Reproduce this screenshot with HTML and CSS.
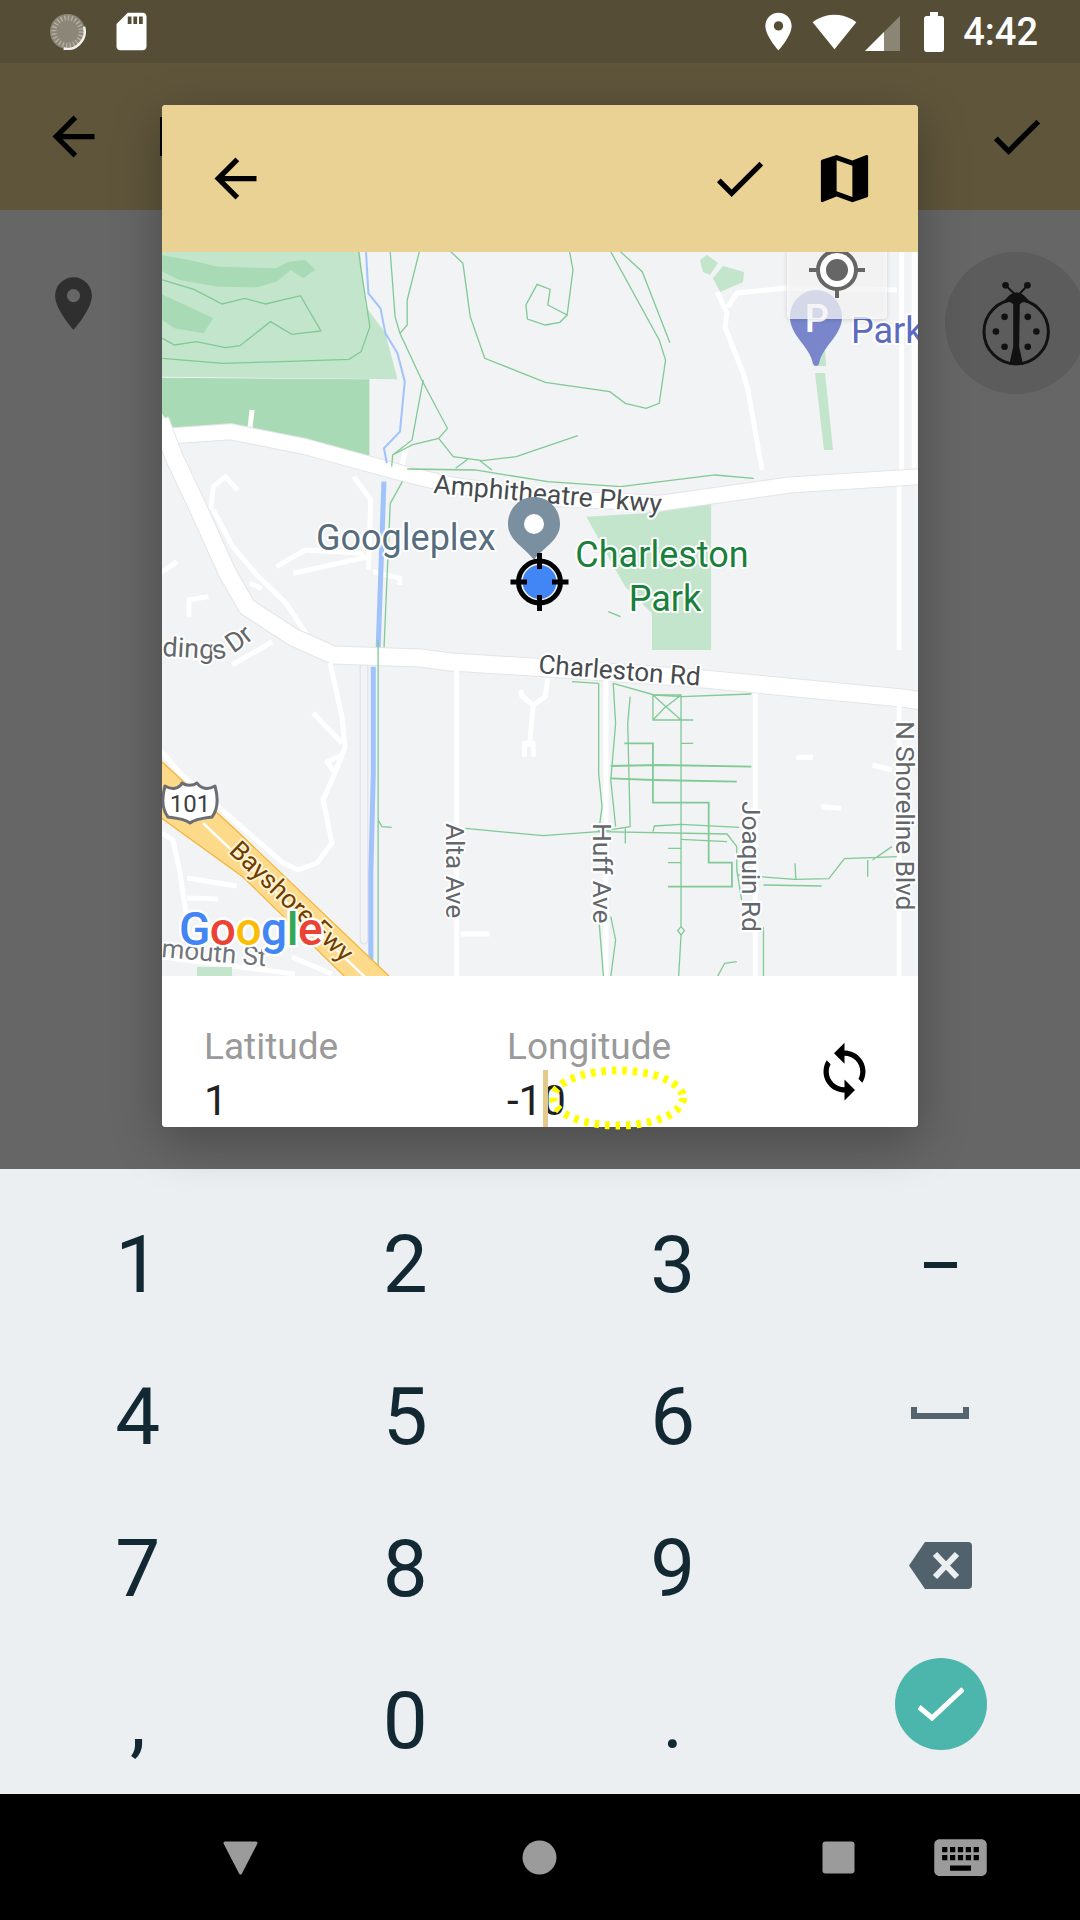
FILE: index.html
```html
<!DOCTYPE html>
<html lang="en">
<head>
<meta charset="utf-8">
<title>Location picker</title>
<link rel="stylesheet" href="styles.css">
</head>
<body>
<div class="screen">
  <div class="status">
    <svg class="st-spin" viewBox="0 0 38 38"><circle cx="19" cy="19" r="18" class="spin-bg"/><circle cx="19" cy="19" r="14" class="spin-ticks"/><path d="M36 14A18 18 0 0 1 15 36.500" class="spin-arc"/></svg>
    <svg class="ico45 st-sd" viewBox="0 0 24 24"><path class="white" d="M18 2h-8L4.020 8 4 20c0 1.100.9 2 2 2h12c1.100 0 2-.9 2-2V4c0-1.100-.9-2-2-2zm-6 6h-2V4h2v4zm3 0h-2V4h2v4zm3 0h-2V4h2v4z"/></svg>
    <div class="status-right">
      <svg class="ico45 st-pin" viewBox="0 0 24 24"><path class="white" d="M12 2C8.130 2 5 5.130 5 9c0 5.250 7 13 7 13s7-7.750 7-13c0-3.870-3.130-7-7-7zm0 9.500a2.500 2.500 0 010-5 2.500 2.500 0 010 5z"/></svg>
      <svg class="ico45" viewBox="0 0 24 24"><path class="white" d="M12.010 21.490L23.640 7c-.45-.34-4.930-4-11.640-4C5.280 3 .81 6.660.36 7l11.630 14.490.01.01.01-.01z"/></svg>
      <svg class="st-signal" viewBox="0 0 35 35"><path class="signal-dim" d="M0 35H35V0z"/><path class="white" d="M0 35H19V16z"/></svg>
      <svg class="ico48 st-batt" viewBox="0 0 24 24"><path class="white" d="M15.670 4H14V2h-4v2H8.330C7.600 4 7 4.600 7 5.330v15.330C7 21.400 7.600 22 8.330 22h7.330c.74 0 1.340-.6 1.340-1.330V5.330C17 4.600 16.400 4 15.670 4z"/></svg>
      <span class="time">4:42</span>
    </div>
  </div>

  <div class="toolbar">
    <svg class="ico63" viewBox="0 0 24 24"><path d="M20 11H7.830l5.590-5.590L12 4l-8 8 8 8 1.410-1.410L7.830 13H20v-2z"/></svg>
    <span class="tb-title"></span>
    <svg class="ico63 tb-check" viewBox="0 0 24 24"><path d="M9 16.170L4.830 12l-1.420 1.410L9 19 21 7l-1.410-1.410z"/></svg>
  </div>

  <div class="content">
    <svg class="ico63 content-pin" viewBox="0 0 24 24"><path class="pin-dark" d="M12 2C8.130 2 5 5.130 5 9c0 5.250 7 13 7 13s7-7.750 7-13c0-3.870-3.130-7-7-7zm0 9.500a2.500 2.500 0 010-5 2.500 2.500 0 010 5z"/></svg>
    <div class="bug-disc">
      <svg class="bug" viewBox="120 80 220 280">
        <path class="bug-line" d="M197 105L225 132M263 105L238 132"/>
        <circle cx="197" cy="105" r="10"/><circle cx="263" cy="105" r="10"/>
        <circle cx="229" cy="245" r="97" class="bug-body"/>
        <path d="M190 160Q205 128 230 126Q255 128 272 160Q250 150 240 162L238 290L250 345H208L220 290L220 162Q210 150 190 160z"/>
        <circle cx="194" cy="200" r="10"/><circle cx="264" cy="200" r="10"/>
        <circle cx="168" cy="244" r="10"/><circle cx="290" cy="244" r="10"/>
        <circle cx="194" cy="290" r="10"/><circle cx="264" cy="290" r="10"/>
      </svg>
    </div>
  </div>

  <div class="keyboard">
    <div class="key">1</div><div class="key">2</div><div class="key">3</div>
    <div class="key"><span class="k-minus"></span></div>
    <div class="key">4</div><div class="key">5</div><div class="key">6</div>
    <div class="key"><svg class="k-space" viewBox="0 0 58 12"><path d="M0 0H6V6H52V0H58V12H0z"/></svg></div>
    <div class="key">7</div><div class="key">8</div><div class="key">9</div>
    <div class="key"><svg class="k-back" viewBox="0 0 63 47"><path class="back-shape" d="M16 0H59a4 4 0 0 1 4 4V43a4 4 0 0 1-4 4H16L0 23.500z"/><path class="back-x" d="M26 12L48 35M48 12L26 35"/></svg></div>
    <div class="key">,</div><div class="key">0</div><div class="key">.</div>
    <div class="key"><div class="fab"><svg class="fab-check" viewBox="0 0 46 34"><path d="M1 20L14 31L45 2"/></svg></div></div>
  </div>

  <div class="nav">
    <svg class="ico63 nav-back" viewBox="0 0 63 63"><path class="nav-fill" d="M16 17H47L31.500 47z"/></svg>
    <svg class="ico63 nav-home" viewBox="0 0 63 63"><circle class="nav-fill-plain" cx="31.500" cy="31.500" r="17"/></svg>
    <svg class="ico63 nav-recent" viewBox="0 0 63 63"><rect class="nav-fill-plain" x="15.500" y="15.500" width="32" height="32" rx="3"/></svg>
    <svg class="ico63 nav-kbd" viewBox="0 0 24 24"><path class="nav-fill-plain" d="M20 5H4c-1.100 0-1.990.9-1.990 2L2 17c0 1.100.9 2 2 2h16c1.100 0 2-.9 2-2V7c0-1.100-.9-2-2-2zm-9 3h2v2h-2V8zm0 3h2v2h-2v-2zM8 8h2v2H8V8zm0 3h2v2H8v-2zm-1 2H5v-2h2v2zm0-3H5V8h2v2zm9 7H8v-2h8v2zm0-4h-2v-2h2v2zm0-3h-2V8h2v2zm3 3h-2v-2h2v2zm0-3h-2V8h2v2z"/></svg>
  </div>

  <div class="dialog">
    <div class="dlg-head">
      <svg class="ico63" viewBox="0 0 24 24"><path d="M20 11H7.830l5.590-5.590L12 4l-8 8 8 8 1.410-1.410L7.830 13H20v-2z"/></svg>
      <div class="dlg-actions">
        <svg class="ico63" viewBox="0 0 24 24"><path d="M9 16.170L4.830 12l-1.420 1.410L9 19 21 7l-1.410-1.410z"/></svg>
        <svg class="ico63" viewBox="0 0 24 24"><path d="M20.500 3l-.16.03L15 5.100 9 3 3.360 4.900c-.21.07-.36.25-.36.48V20.500c0 .28.22.5.5.5l.16-.03L9 18.900l6 2.100 5.640-1.900c.21-.07.36-.25.36-.48V3.500c0-.28-.22-.5-.5-.5zM15 19l-6-2.110V5l6 2.110V19z"/></svg>
      </div>
    </div>

    <svg class="map" viewBox="0 0 756 724">
      <defs><path id="dings-curve" d="M0 404L55 407Q68 407 97 382"/></defs>
      <rect class="m-bg" width="756" height="724"/>

      <g transform="translate(-2,-2) scale(.4847,.3333)">
        <path class="park" d="M0 0H412L425 170L465 250L490 388L0 380z"/>
        <path class="park2" d="M0 383L432 388V628L330 590L145 530L30 550L0 480z"/>
        <path class="park2" d="M0 15L60 30L120 50L240 55L265 35L300 30L320 60L295 85L270 60L240 95L200 112L120 110L40 90L0 60z"/>
        <path class="park2" d="M0 130L110 205L90 250L30 235L0 205z"/>
        <path class="park" d="M880 800L1000 790L1137 745V1200H1015V1090L960 1010L940 960z"/>
        <g class="road-minor">
          <path d="M190 480L185 540M510 580L497 660M400 680L435 750L430 960"/>
          <path d="M1530 0V690M1556 0V690"/>
          <path d="M105 780L110 710L135 680L160 720M110 780L150 890L200 975L260 1060L310 1170"/>
          <path d="M240 950L300 900L420 910M275 970L430 920M440 965L495 985V1005M185 1000L210 1015M60 1100V1050L100 1040M0 970L35 935"/>
          <path d="M1525 700V1200"/>
        </g>
        <path class="road-case" d="M0 560L145 545L300 590L500 670L600 705L800 745L1030 760L1300 705L1568 680"/>
        <path class="road-main" d="M0 560L145 545L300 590L500 670L600 705L800 745L1030 760L1300 705L1568 680"/>
        <g class="trail">
          <path d="M5 90L70 118L128 162L175 145L218 162L290 137L332 243L272 253L228 215L165 287L135 293L75 275L30 285L5 265"/>
          <path d="M5 325L130 340L250 335L390 328L415 305L433 230L415 60L410 5"/>
          <path d="M475 5L485 200L495 250L540 390L593 535L575 565L605 620L665 632L735 620L862 557"/>
          <path d="M535 5L510 150V225L495 250"/>
          <path d="M600 5L625 40L640 200L670 325L795 397L928 425L960 460L1003 475L1030 460L1043 330L1030 270L930 5"/>
          <path d="M950 5L995 65L1052 278"/>
          <path d="M845 5L852 60L840 195L800 165L805 118L778 103L755 165L758 207L795 225L825 217L840 195"/>
          <path d="M543 390L520 570L480 615L478 650M575 565L520 585L480 615"/>
          <path d="M510 657L650 660L800 695L950 710L1145 675L1225 685M635 628L610 655M660 632L685 660"/>
          <path d="M500 695L475 760L462 1200"/>
          <path d="M925 1085L950 1100"/>
        </g>
        <path class="water" d="M425 5L430 130L455 175L465 250L490 310L505 395L495 545L462 595L468 640"/>
        <path class="water-w" d="M462 695L450 1200"/>
      </g>

      <path class="park" d="M538 8L545 3L556 11L548 23L541 20zM551 26L561 14L582 20L581 30L558 40z"/>
      <path class="park" d="M651 98H663L664 114H652zM653 121H663L671 198H662z"/>
      <path class="road-minor-s" d="M555 40L565 61L563 75L581 121L586 138L600 218M566 55L575 41L625 36L735 38"/>
      <path class="road-edge" d="M202 415V688"/>
      <path class="road-fill" d="M202 415V688"/>
      <path class="road-casing-big" d="M-2 168L12 205L37 258L65 320L85 355L131 385L171 403L258 406L289 410L386 416L531 426L740 446L760 449"/>
      <path class="road-big" d="M-2 168L12 205L37 258L65 320L85 355L131 385L171 403L258 406L289 410L386 416L531 426L740 446L760 449"/>
      <path class="road-minor-s" d="M168 411L180 465L183 495L173 521L161 548L170 591L155 611L136 618L121 611L75 571L18 521L-2 498"/>
      <path class="road-minor-s" d="M151 461L180 491M180 503L165 510L173 521M70 413L110 390"/>
      <path class="road-minor-s" d="M0 581L11 588L18 621L25 668M25 626L75 634M25 646L56 647"/>
      <path class="road-minor-s" d="M0 705L133 722M130 705L170 722"/>

      <g transform="translate(-2,388) scale(.4847,.3333)">
        <path class="road-minor" d="M612 90V1010M920 120V1010M1228 160V1010M1525 190V1010"/>
        <path class="road-minor" d="M800 115L795 170L770 195L745 165V150M770 195L762 320M752 350V310H770V350M1313 352H1347M1365 500L1405 505M1470 375L1510 390M620 882H680"/>
        <path class="water-w" d="M440 80V400L435 700V1010"/>
        <g class="trail">
          <path d="M450 0V540L458 560L478 562M450 540V1010"/>
          <path d="M850 125L905 130M935 130L1020 165L1075 170L1220 162"/>
          <path d="M1017 165H1075V240H1017zM1017 165L1040 195L1075 240M1075 165L1040 205L1017 240M1075 240H1100M1075 170V860M1075 885L1070 1010"/>
          <path d="M1075 860L1082 872L1075 885L1068 872z"/>
          <path d="M970 170L965 250L970 560L905 575"/>
          <path d="M630 565L790 587L905 575L1170 582L1190 620L1190 690L1200 780"/>
          <path d="M1017 575L1020 558L1075 553L1195 562M1075 598L1170 605M960 565V610M1048 625H1075M1048 668H1075M1075 310H1100"/>
          <path d="M905 130V400L912 500L905 575M935 130L940 250L930 420L940 560M930 830L940 900L930 1010M905 830L915 1010M1245 860V1010M1150 1010L1165 970L1190 965"/>
          <path d="M1190 705L1310 718L1380 716L1412 656L1520 650M1245 735L1365 738M1310 670L1312 720M1460 660V710M1470 660L1510 620"/>
        </g>
        <g class="trail-b">
          <path d="M958 310H1017V488H1132V668H1180V740H1048"/>
          <path d="M930 378L1030 375L1220 380M930 415L1017 420L1190 425"/>
        </g>
      </g>

      <path class="park" d="M35 715H70V725H35z"/>
      <path class="free-road" d="M-2 508L76 580L228 725H183L81 625L-2 565z"/>
      <path class="free-mid" d="M41 571L203 725"/>

      <path class="p-pin" d="M654 38C640 38 628 50 628 65C628 84 648 94 651 112Q654 116 657 112C660 94 680 84 680 65C680 50 668 38 654 38z"/>
      <text class="p-letter" x="655" y="80">P</text>
      <text class="t-park" x="689" y="91">Park</text>
      <rect class="loc-box" x="625" y="-6" width="100" height="73" rx="4"/>
      <g>
        <circle class="loc-ring" cx="675" cy="18" r="19"/>
        <circle class="loc-dot" cx="675" cy="18" r="11"/>
        <path class="loc-tick" d="M647 18H656M694 18H703M675 37V46"/>
      </g>

      <text class="t-road" transform="translate(271,241) rotate(5)">Amphitheatre Pkwy</text>
      <text class="t-poi" x="154" y="298">Googleplex</text>
      <text class="t-green" x="500" y="315">Charleston</text>
      <text class="t-green" x="503" y="359">Park</text>
      <text class="t-dings"><textPath href="#dings-curve">dings Dr</textPath></text>
      <text class="t-road t-road-sm" transform="translate(376,421) rotate(4.500)">Charleston Rd</text>
      <text class="t-side" transform="translate(284,571) rotate(90)">Alta Ave</text>
      <text class="t-side" transform="translate(431,571) rotate(90)">Huff Ave</text>
      <text class="t-side" transform="translate(580,549) rotate(90)">Joaquin Rd</text>
      <text class="t-side" transform="translate(734,469) rotate(90)">N Shoreline Blvd</text>
      <text class="t-mouth" transform="translate(-1,705) rotate(5)">mouth St</text>
      <text class="t-free" transform="translate(66,600) rotate(44)">Bayshore Fwy</text>

      <path class="shield" d="M3 534C10 538 17 537 20 531C24 534 31 534 35 531C39 537 46 538 53 534C56 545 57 556 50 565C43 566 33 567 28 571C23 567 13 566 6 565C-1 556 0 545 3 534z"/>
      <text class="t-shield" x="28" y="560">101</text>

      <text class="t-logo" x="17" y="693"><tspan class="g-b">G</tspan><tspan class="g-r">o</tspan><tspan class="g-y">o</tspan><tspan class="g-b">g</tspan><tspan class="g-g">l</tspan><tspan class="g-r">e</tspan></text>

      <path class="grey-pin" d="M372 245C357 245 346 257 346 272C346 289 364 296 372 308C380 296 398 289 398 272C398 257 387 245 372 245z"/>
      <circle class="white" cx="372" cy="272" r="10"/>
      <circle class="cross-disc" cx="377.500" cy="330" r="17"/>
      <circle class="cross-ring" cx="377.500" cy="330" r="21"/>
      <path class="cross-lines" d="M348.500 330H365M390 330H406.500M377.500 301V317M377.500 343V359"/>
    </svg>

    <div class="dlg-foot">
      <div class="field">
        <div class="f-label">Latitude</div>
        <div class="f-value">1</div>
      </div>
      <div class="field">
        <div class="f-label">Longitude</div>
        <div class="f-value">-10</div>
        <span class="cursor"></span>
      </div>
      <svg class="ico63 sync" viewBox="0 0 24 24"><path d="M12 4V1L8 5l4 4V6c3.310 0 6 2.690 6 6 0 1.010-.25 1.970-.7 2.800l1.460 1.460C19.540 15.030 20 13.570 20 12c0-4.420-3.580-8-8-8zm0 14c-3.310 0-6-2.690-6-6 0-1.010.25-1.970.7-2.800L5.240 7.740C4.460 8.970 4 10.430 4 12c0 4.420 3.580 8 8 8v3l4-4-4-4v3z"/></svg>
    </div>
  </div>

  <svg class="touch" viewBox="0 0 142 68"><ellipse cx="71" cy="34" rx="65" ry="27.500"/></svg>
</div>
</body>
</html>
```

FILE: styles.css
```css
* { box-sizing: border-box; }
html, body { margin: 0; padding: 0; }
body { width: 1080px; height: 1920px; overflow: hidden; font-family: Roboto, "Liberation Sans", sans-serif; }
svg { display: block; flex: none; }
.screen { position: relative; width: 1080px; height: 1920px; overflow: hidden; display: flex; flex-direction: column; }
.ico45 { width: 45px; height: 45px; }
.ico48 { width: 48px; height: 48px; }
.ico63 { width: 63px; height: 63px; }
.white { fill: #fff; }

.status { height: 63px; background: #564d36; display: flex; align-items: center; padding-left: 49px; }
.st-spin { width: 37px; height: 37px; }
.spin-bg { fill: #8b8677; }
.spin-ticks { fill: none; stroke: #b5b1a3; stroke-width: 5; stroke-dasharray: 1.400 2.260; }
.spin-arc { fill: none; stroke: #f2f1ec; stroke-width: 2.500; }
.st-sd { margin-left: 23px; }
.status-right { margin-left: auto; display: flex; align-items: center; padding-right: 42px; }
.st-pin { margin-right: 11px; }
.st-signal { width: 35px; height: 35px; margin: 3px 0 0 8px; }
.signal-dim { fill: #8a8574; }
.st-batt { margin-left: 10px; }
.time { font-size: 38px; font-weight: 500; color: #fff; margin-left: 5px; }

.toolbar { height: 147px; background: #5f553b; display: flex; align-items: center; padding: 0 32px 0 42px; }
.tb-title { width: 3px; height: 39px; background: #000; margin-left: 55px; }
.tb-check { margin-left: auto; }

.content { height: 959px; background: #666; position: relative; padding: 62px 0 0 42px; overflow: hidden; }
.pin-dark { fill: #2f2f2f; }
.bug-disc { position: absolute; left: 945px; top: 42px; width: 142px; height: 142px; border-radius: 50%; background: #5c5c5c; display: flex; align-items: center; justify-content: center; }
.bug { width: 73px; height: 93px; fill: #111; }
.bug-body { fill: none; stroke: #111; stroke-width: 9; }
.bug-line { fill: none; stroke: #111; stroke-width: 6; }

.keyboard { height: 625px; background: #ebeff2; display: grid; grid-template-columns: repeat(4, 267.500px); grid-auto-rows: 152px; padding: 20px 0 0 4px; }
.key { display: flex; align-items: center; justify-content: center; font-size: 80px; line-height: 1; color: #122833; }
.k-minus { width: 33px; height: 6px; background: #12262f; }
.k-space { width: 58px; height: 12px; margin-bottom: 8px; fill: #546570; }
.k-back { width: 63px; height: 47px; margin-bottom: 8px; }
.back-shape { fill: #51626d; }
.back-x { stroke: #ebeff2; stroke-width: 6; fill: none; }
.fab { width: 92px; height: 92px; border-radius: 50%; background: #4db6ac; display: flex; align-items: center; justify-content: center; margin: 0 0 34px 2px; }
.fab-check { width: 46px; height: 34px; fill: none; stroke: #fff; stroke-width: 5; }

.nav { height: 126px; background: #000; display: flex; align-items: center; padding-left: 209px; }
.nav-fill { fill: #9b9b9b; stroke: #9b9b9b; stroke-width: 3; stroke-linejoin: round; }
.nav-fill-plain { fill: #9b9b9b; }
.nav-home { margin-left: 236px; }
.nav-recent { margin-left: 236px; }
.nav-kbd { margin-left: 59px; }

.dialog { position: absolute; left: 162px; top: 105px; width: 756px; height: 1022px; display: flex; flex-direction: column; background: #fff; border-radius: 4px; box-shadow: 0 14px 50px rgba(0, 0, 0, .28); overflow: hidden; }
.dlg-head { height: 147px; background: #e9d294; display: flex; align-items: center; justify-content: space-between; padding: 0 42px; }
.dlg-actions { display: flex; gap: 42px; }
.map { width: 756px; height: 724px; }
.m-bg { fill: #f1f3f4; }

.park { fill: #c2e5cb; }
.park2 { fill: #a8dab5; }
.road-minor { fill: none; stroke: #fff; stroke-width: 5; stroke-linejoin: round; vector-effect: non-scaling-stroke; }
.road-minor path { fill: none; stroke: #fff; stroke-width: 5; vector-effect: non-scaling-stroke; }
.road-minor-s { fill: none; stroke: #fff; stroke-width: 5; stroke-linejoin: round; }
.road-main { fill: none; stroke: #fff; stroke-width: 15; stroke-linejoin: round; vector-effect: non-scaling-stroke; }
.road-case { fill: none; stroke: #e3e5e8; stroke-width: 17; stroke-linejoin: round; vector-effect: non-scaling-stroke; }
.road-big { fill: none; stroke: #fff; stroke-width: 17; stroke-linejoin: round; }
.road-casing-big { fill: none; stroke: #e3e5e8; stroke-width: 19; stroke-linejoin: round; }
.road-edge { fill: none; stroke: #e3e5e8; stroke-width: 9; stroke-linecap: round; }
.road-fill { fill: none; stroke: #f1f3f4; stroke-width: 6; stroke-linecap: round; }
.trail path { fill: none; stroke: #81c995; stroke-width: 1.300; vector-effect: non-scaling-stroke; }
.trail-b path { fill: none; stroke: #81c995; stroke-width: 1.800; vector-effect: non-scaling-stroke; }
.water { fill: none; stroke: #a1c2fa; stroke-width: 2; vector-effect: non-scaling-stroke; }
.water-w { fill: none; stroke: #a1c2fa; stroke-width: 5; vector-effect: non-scaling-stroke; }
.free-road { fill: #fdd98a; stroke: #f5b335; stroke-width: 1.200; }
.free-mid { fill: none; stroke: #fff; stroke-width: 2.500; }

.map text { font-family: Roboto, "Liberation Sans", sans-serif; paint-order: stroke; stroke: #fff; stroke-width: 4px; stroke-linejoin: round; }
.p-pin { fill: #7986cb; }
.map .p-letter { font-size: 38px; font-weight: 500; fill: #fff; stroke: none; text-anchor: middle; }
.map .t-park { font-size: 36px; fill: #5c6bc0; }
.loc-box { fill: rgba(255, 255, 255, .72); filter: drop-shadow(0 1px 2px rgba(0, 0, 0, .2)); }
.loc-ring { fill: #fff; stroke: #666; stroke-width: 4; }
.loc-dot { fill: #666; }
.loc-tick { fill: none; stroke: #666; stroke-width: 4; }
.map .t-road { font-size: 26.500px; fill: #474a4e; }
.map .t-road-sm { font-size: 26px; }
.map .t-dings { font-size: 27px; fill: #63676c; }
.map .t-mouth { font-size: 26px; fill: #70757a; }
.map .t-poi { font-size: 36px; fill: #566d7d; }
.map .t-green { font-size: 36px; fill: #1a7f3c; text-anchor: middle; }
.map .t-side { font-size: 26.500px; letter-spacing: -.2px; fill: #63676c; }
.map .t-free { font-size: 26px; fill: #6d3c00; stroke: #fff2d0; }
.shield { fill: #fff; stroke: #6b6f74; stroke-width: 3; stroke-linejoin: round; }
.map .t-shield { font-size: 24px; fill: #3c4043; stroke: none; text-anchor: middle; }
.map .t-logo { font-size: 46px; font-weight: 500; letter-spacing: -.5px; stroke-width: 5px; }
.g-b { fill: #4285f4; }
.g-r { fill: #ea4335; }
.g-y { fill: #fbbc04; }
.g-g { fill: #34a853; }
.grey-pin { fill: #7a8f9f; }
.cross-disc { fill: #4285f4; }
.cross-ring { fill: none; stroke: #000; stroke-width: 5; }
.cross-lines { fill: none; stroke: #000; stroke-width: 5; }

.dlg-foot { height: 151px; display: flex; position: relative; padding: 47px 0 0 42px; background: #fff; }
.field { width: 303px; position: relative; }
.f-label { font-size: 37px; line-height: 48px; color: #9a9a9a; }
.f-value { font-size: 42px; line-height: 52px; margin-top: 4px; color: #212121; }
.cursor { position: absolute; left: 36px; top: 47px; width: 5px; height: 57px; background: #e3c98b; }
.sync { margin: 17px 0 0 3px; }

.touch { position: absolute; left: 547px; top: 1064px; width: 142px; height: 68px; fill: none; stroke: #ffff00; stroke-width: 8; stroke-dasharray: 4.500 6; }
```
